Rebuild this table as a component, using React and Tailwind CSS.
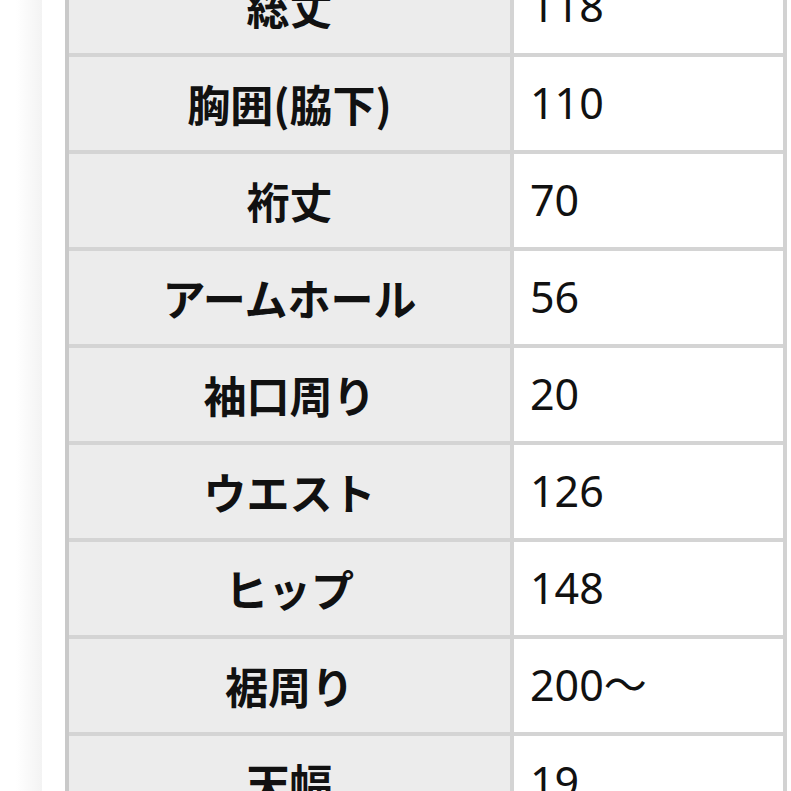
const rows = [
  ['総丈', '118'],
  ['胸囲(脇下)', '110'],
  ['裄丈', '70'],
  ['アームホール', '56'],
  ['袖口周り', '20'],
  ['ウエスト', '126'],
  ['ヒップ', '148'],
  ['裾周り', '200～'],
  ['天幅', '19'],
];

export default function App() {
  return (
    <div className="relative h-[791px] w-[791px] overflow-hidden bg-white">
      <div className="absolute left-[16px] top-0 h-full w-[26px] bg-gradient-to-r from-white to-[#f3f3f3]" />
      <div className="ml-[65px] mt-[-44px] w-[722px] border-x-[4px] border-l-[#c9c9c9] border-r-[#d2d2d2] bg-[#d4d4d4] py-[4px]">
        <div className="grid grid-cols-[441px_269px] gap-x-[4px] gap-y-[4px]">
          {rows.map(([label, value]) => (
            <div key={label} className="contents">
              <div className="flex h-[93px] items-center justify-center bg-[#ececec] font-['Noto_Sans_CJK_JP',sans-serif] text-[43px] font-bold text-[#111]">
                {label}
              </div>
              <div className="flex h-[93px] items-center bg-white pl-[16px] font-['Noto_Sans','Noto_Sans_CJK_JP',sans-serif] text-[43px] text-[#111]">
                {value}
              </div>
            </div>
          ))}
        </div>
      </div>
    </div>
  );
}
